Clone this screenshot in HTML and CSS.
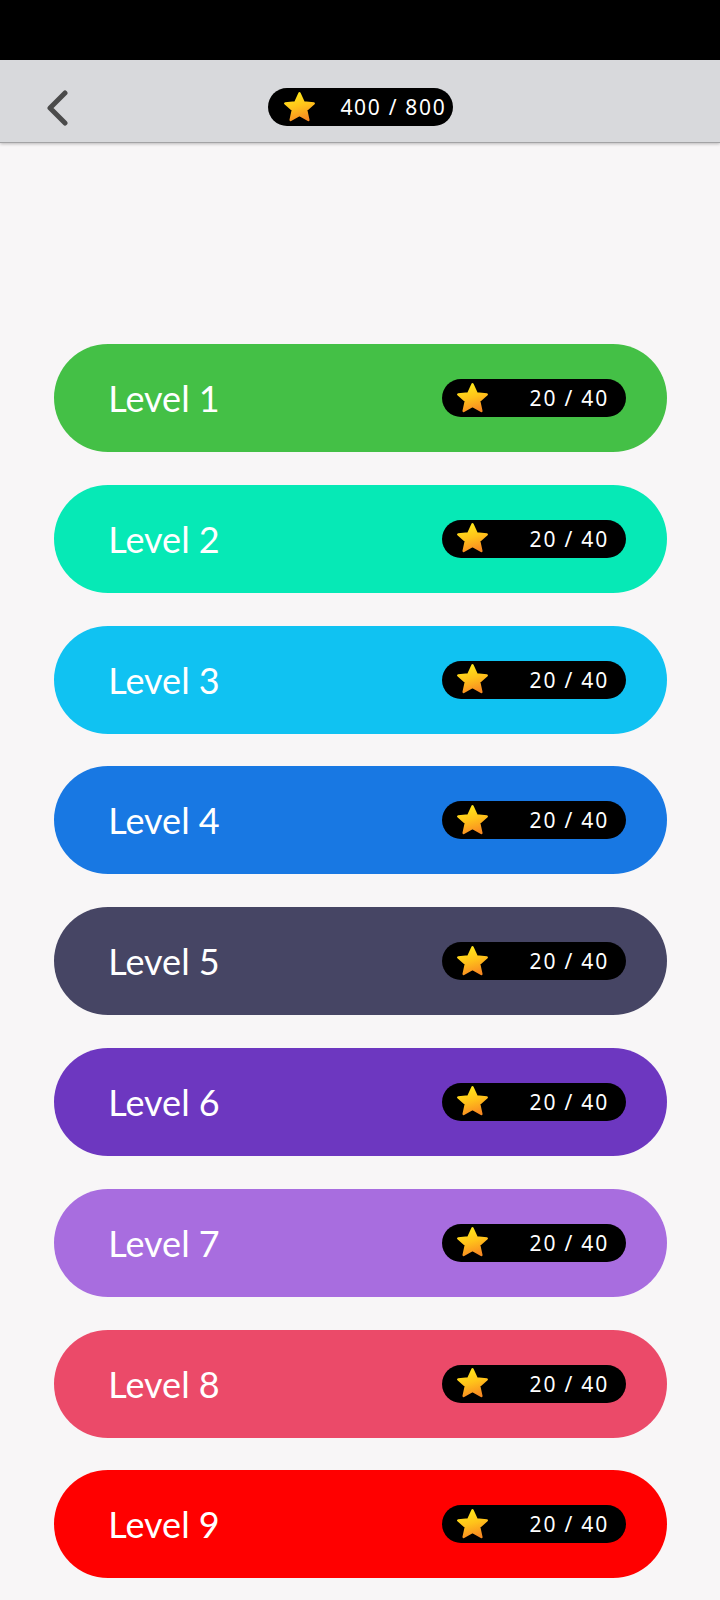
FILE: index.html
```html
<!DOCTYPE html>
<html lang="en">
<head>
  <meta charset="UTF-8">
  <meta name="viewport" content="width=device-width, initial-scale=1.0">
  <title>Levels</title>
  <link rel="stylesheet" href="styles.css">
</head>
<body>
  <svg width="0" height="0" class="defs">
    <defs>
      <linearGradient id="starFill" x1="0.3" y1="0" x2="0.6" y2="1">
        <stop offset="0" stop-color="#ffe81a"/>
        <stop offset="0.5" stop-color="#ffc21a"/>
        <stop offset="1" stop-color="#f98a22"/>
      </linearGradient>
      <symbol id="star" viewBox="0 0 24 24">
        <path d="M12 2.2l2.9 6.3 6.9.7-5.2 4.6 1.5 6.8L12 17.1l-6.1 3.5 1.5-6.8-5.2-4.6 6.9-.7z"
              fill="url(#starFill)" stroke="url(#starFill)" stroke-width="1.6" stroke-linejoin="round"/>
      </symbol>
    </defs>
  </svg>

  <div class="status-bar"></div>

  <header class="top-bar">
    <div class="back">
      <svg width="26" height="36" viewBox="0 0 26 36">
        <path d="M20 3 L5 18 L20 33" fill="none" stroke="#4b4b4b" stroke-width="5" stroke-linecap="round" stroke-linejoin="round"/>
      </svg>
    </div>
    <div class="score total">
      <svg class="star"><use href="#star"/></svg>
      <span>400 / 800</span>
    </div>
    <div></div>
  </header>

  <main class="levels">
    <div class="level lv1">
      <span class="level-name">Level 1</span>
      <div class="score"><svg class="star"><use href="#star"/></svg><span>20 / 40</span></div>
    </div>
    <div class="level lv2">
      <span class="level-name">Level 2</span>
      <div class="score"><svg class="star"><use href="#star"/></svg><span>20 / 40</span></div>
    </div>
    <div class="level lv3">
      <span class="level-name">Level 3</span>
      <div class="score"><svg class="star"><use href="#star"/></svg><span>20 / 40</span></div>
    </div>
    <div class="level lv4">
      <span class="level-name">Level 4</span>
      <div class="score"><svg class="star"><use href="#star"/></svg><span>20 / 40</span></div>
    </div>
    <div class="level lv5">
      <span class="level-name">Level 5</span>
      <div class="score"><svg class="star"><use href="#star"/></svg><span>20 / 40</span></div>
    </div>
    <div class="level lv6">
      <span class="level-name">Level 6</span>
      <div class="score"><svg class="star"><use href="#star"/></svg><span>20 / 40</span></div>
    </div>
    <div class="level lv7">
      <span class="level-name">Level 7</span>
      <div class="score"><svg class="star"><use href="#star"/></svg><span>20 / 40</span></div>
    </div>
    <div class="level lv8">
      <span class="level-name">Level 8</span>
      <div class="score"><svg class="star"><use href="#star"/></svg><span>20 / 40</span></div>
    </div>
    <div class="level lv9">
      <span class="level-name">Level 9</span>
      <div class="score"><svg class="star"><use href="#star"/></svg><span>20 / 40</span></div>
    </div>
  </main>
</body>
</html>
```

FILE: styles.css
```css
html, body {
  margin: 0;
  padding: 0;
}
body {
  background: #f8f6f7;
  font-family: Lato, "Noto Sans", sans-serif;
  width: 720px;
  height: 1600px;
  overflow: hidden;
}
.defs {
  position: absolute;
}
.status-bar {
  height: 60px;
  background: #000;
}
.top-bar {
  height: 82px;
  box-sizing: border-box;
  padding: 28px 0 0 45px;
  background: #d8d9dc;
  display: grid;
  grid-template-columns: 1fr auto 1fr;
  align-items: start;
  box-shadow: 0 1px 0 #a3a3a5, 0 2px 3px rgba(0,0,0,0.25);
  position: relative;
}
.back {
  padding-top: 2px;
}
.back svg {
  display: block;
}
.score {
  height: 38px;
  box-sizing: border-box;
  background: #000;
  border-radius: 19px;
  display: flex;
  align-items: center;
  justify-content: space-between;
  color: #fff;
  font-family: "Noto Sans", sans-serif;
  font-size: 21px;
  letter-spacing: 1.8px;
}
.score .star {
  width: 35px;
  height: 35px;
  flex-shrink: 0;
}
.total {
  width: 185px;
  padding: 0 6px 0 14px;
  margin-left: -45px;
  letter-spacing: 1.7px;
}
.levels {
  padding: 202px 53px 0 54px;
  display: flex;
  flex-direction: column;
  gap: 32.8px;
}
.level {
  height: 108px;
  border-radius: 54px;
  display: flex;
  align-items: center;
  justify-content: space-between;
  padding-right: 41px;
}
.level-name {
  width: 220px;
  text-align: center;
  color: #fff;
  font-size: 36px;
}
.level .score {
  width: 184px;
  padding: 0 17px 0 13px;
}
.lv1 { background: #44c046; }
.lv2 { background: #06e9b6; }
.lv3 { background: #10c2f2; }
.lv4 { background: #1878e3; }
.lv5 { background: #464564; }
.lv6 { background: #6d37c0; }
.lv7 { background: #a86ddf; }
.lv8 { background: #eb4a69; }
.lv9 { background: #ff0000; }
```
